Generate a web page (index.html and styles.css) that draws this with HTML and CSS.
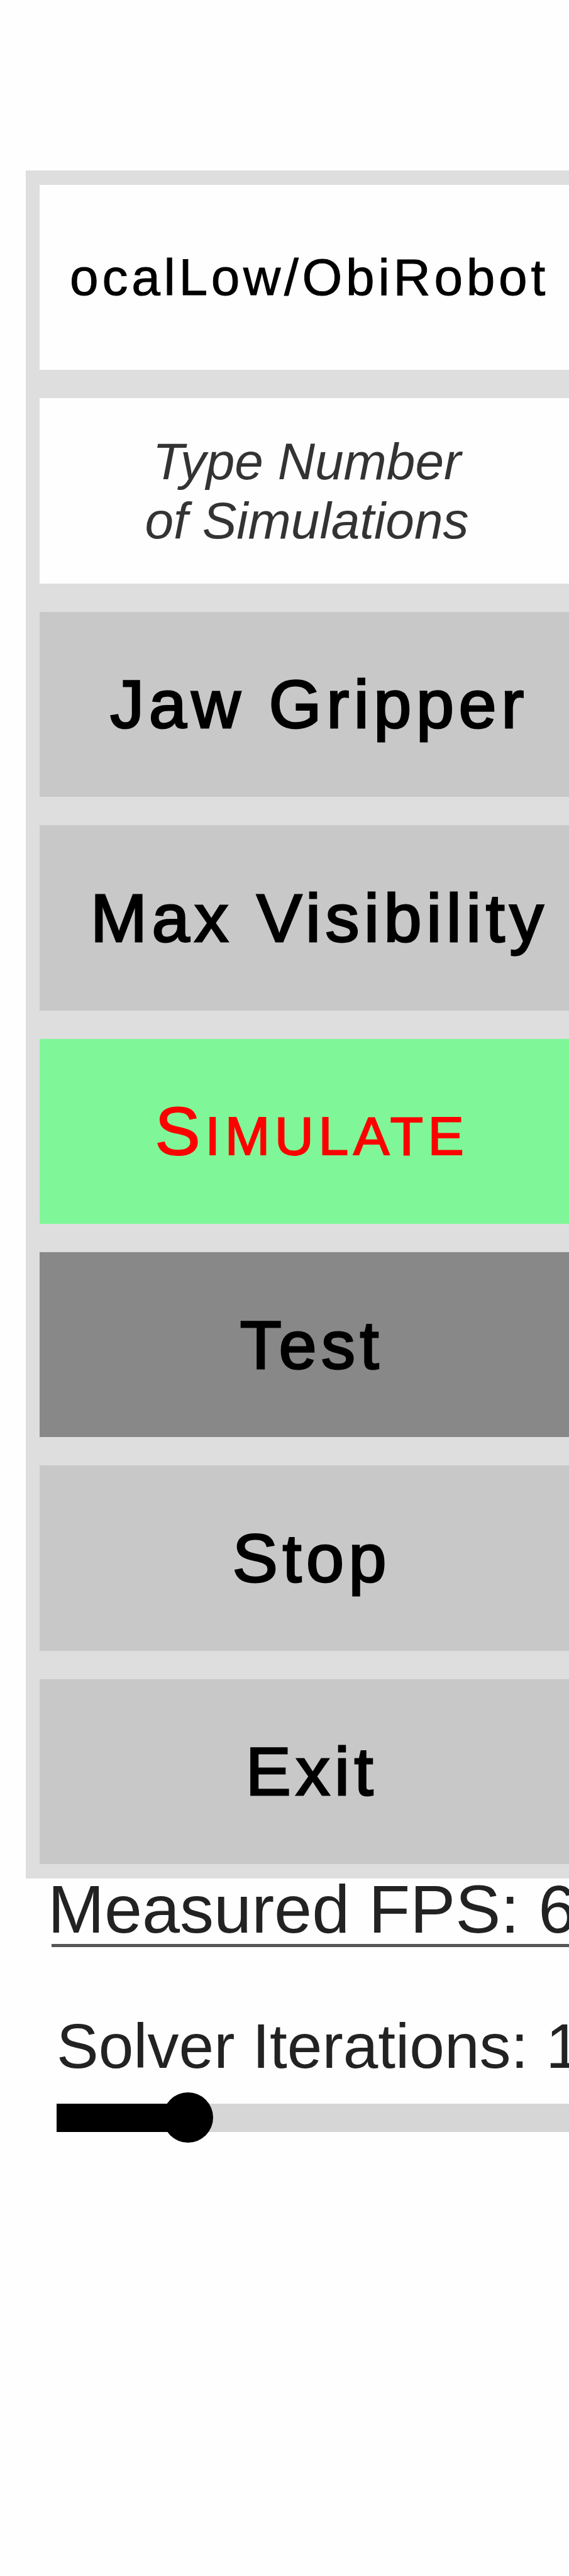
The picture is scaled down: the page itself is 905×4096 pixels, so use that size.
FILE: index.html
```html
<!DOCTYPE html>
<html lang="en">
<head>
<meta charset="utf-8">
<title>ObiRobot</title>
<link rel="stylesheet" href="styles.css">
</head>
<body>
<main class="app">
  <form class="panel">
    <input class="field path" type="text" aria-label="Output path" value="ocalLow/ObiRobot">
    <textarea class="field count" aria-label="Number of simulations" placeholder="Type Number of Simulations"></textarea>
    <button class="action shifted" type="button">Jaw Gripper</button>
    <button class="action shifted" type="button">Max Visibility</button>
    <button class="action simulate" type="button"><span class="caps">Simulate</span></button>
    <button class="action test" type="button">Test</button>
    <button class="action" type="button">Stop</button>
    <button class="action" type="button">Exit</button>
  </form>
  <section class="stats">
    <p class="fps">Measured FPS: 6</p>
    <div class="solver">
      <label class="solver-label" for="iterations">Solver Iterations: 1</label>
      <input class="slider" id="iterations" type="range" min="0" max="100" value="23">
    </div>
  </section>
</main>
</body>
</html>
```
FILE: styles.css
```css
* {
  box-sizing: border-box;
}

body {
  margin: 0;
  background: #fefefe;
  color: #000;
  font-family: "Liberation Sans", Arial, sans-serif;
}

.app {
  overflow: hidden;
  padding-top: 271px;
}

/* The panel runs past the right edge of the window. */
.panel {
  display: grid;
  grid-auto-rows: 1fr;
  gap: 45px;
  min-height: 2716px;
  margin: 0 -46px 0 41px;
  padding: 23px 22px;
  background: #dedede;
}

.field,
.action {
  display: block;
  width: 100%;
  margin: 0;
  border: 0;
  border-radius: 0;
  font-family: inherit;
  text-align: center;
}

.field {
  background: #fefefe;
  font-size: 82px;
}

.path {
  padding: 0 48px 0 40px;
  color: #000;
  letter-spacing: 0.07em;
  -webkit-text-stroke: 1px #000;
}

.count {
  padding: 54px 172px 50px 156px;
  line-height: 94px;
  resize: none;
  overflow: hidden;
}

.count::placeholder {
  color: #333;
  font-style: italic;
}

.action {
  padding: 0;
  background: #c8c8c8;
  color: #000;
  font-size: 108px;
  letter-spacing: 0.07em;
  white-space: nowrap;
  -webkit-text-stroke: 3px currentColor;
}

.shifted {
  padding-left: 24px;
}

.simulate {
  background: #7ff798;
  color: #f00;
  -webkit-text-stroke-width: 2px;
}

.caps {
  display: block;
  font-size: 86px;
  text-transform: uppercase;
}

.caps::first-letter {
  font-size: 108px;
}

.test {
  background: #888;
}

.stats {
  color: #222;
  white-space: nowrap;
}

.fps {
  margin: 0 0 0 76px;
  font-size: 108px;
  line-height: 98px;
}

.fps::after {
  content: "";
  display: block;
  height: 5px;
  margin: 6px 0 0 6px;
  background: #555;
}

.solver {
  display: flex;
  flex-direction: column;
  gap: 24px;
  margin: 107px 0 0 90px;
}

.solver-label {
  font-size: 100px;
  line-height: 100px;
}

.slider {
  -webkit-appearance: none;
  appearance: none;
  width: 100%;
  height: 80px;
  margin: 0;
  background: transparent;
}

.slider::-webkit-slider-runnable-track {
  height: 45px;
  background: linear-gradient(to right, #000 25%, #d6d6d6 25%);
}

.slider::-webkit-slider-thumb {
  -webkit-appearance: none;
  width: 80px;
  height: 80px;
  margin-top: -18px;
  border-radius: 50%;
  background: #000;
}
```
